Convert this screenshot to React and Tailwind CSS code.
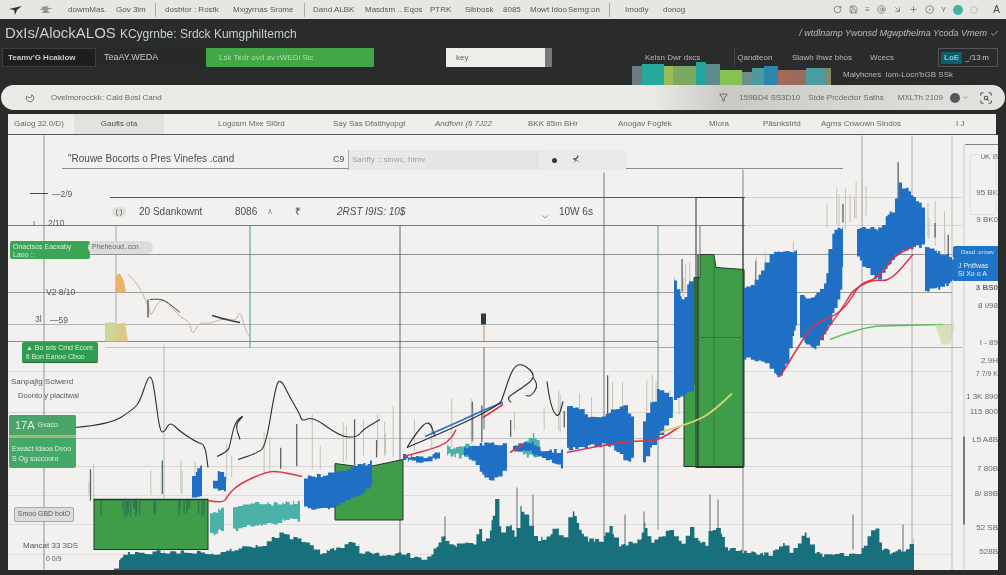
import { Circle, CircleDot, Save, AtSign, Plus, ChevronDown, Filter, ScanSearch, Check, RotateCw, ArrowDownRight, Moon } from 'lucide-react';

// small seeded random so the chart comes out the same on each load
function rng(seed) {
    let a = seed;
    return () => {
        a = (a + 0x6d2b79f5) | 0;
        let t = Math.imul(a ^ (a >>> 15), 1 | a);
        t = (t + Math.imul(t ^ (t >>> 7), 61 | t)) ^ t;
        return ((t ^ (t >>> 14)) >>> 0) / 4294967296;
    };
}

function lerp(pts, x) {
    for (let i = 0; i < pts.length - 1; i++) {
        const [x0, y0] = pts[i];
        const [x1, y1] = pts[i + 1];
        if (x >= x0 && x <= x1) return y0 + ((y1 - y0) * (x - x0)) / (x1 - x0 || 1);
    }
    return pts[pts.length - 1][1];
}

// blocky band between a top and a bottom profile, jitter is held for a few px
function band(top, bottom, seed, amp = 5) {
    const r = rng(seed);
    const x0 = top[0][0];
    const x1 = top[top.length - 1][0];
    const up = [];
    const down = [];
    let x = x0;
    while (x < x1) {
        const w = 1 + r() * 4;
        const nx = Math.min(x + w, x1);
        const ya = (lerp(top, x) + (r() - 0.5) * amp).toFixed(1);
        const yb = (lerp(bottom, x) + (r() - 0.5) * amp).toFixed(1);
        up.push(`${x.toFixed(1)},${ya}`, `${nx.toFixed(1)},${ya}`);
        down.unshift(`${nx.toFixed(1)},${yb}`, `${x.toFixed(1)},${yb}`);
        x = nx;
    }
    return [...up, ...down].join(' ');
}

function wicks(x0, x1, count, top, len, seed) {
    const r = rng(seed);
    const out = [];
    for (let i = 0; i < count; i++) {
        const x = x0 + r() * (x1 - x0);
        const y = lerp(top, x);
        out.push([x, y - 4 - r() * len, y + 4 + r() * 10]);
    }
    return out;
}

// rounded line through the points
function smooth(pts) {
    let d = `M${pts[0][0]} ${pts[0][1]}`;
    for (let i = 1; i < pts.length - 1; i++) {
        const mx = (pts[i][0] + pts[i + 1][0]) / 2;
        const my = (pts[i][1] + pts[i + 1][1]) / 2;
        d += ` Q${pts[i][0]} ${pts[i][1]} ${mx} ${my}`;
    }
    const last = pts[pts.length - 1];
    return `${d} L${last[0]} ${last[1]}`;
}

const hLines = [
    [62, 348, 169, '#6f7270', 0.8],
    [625, 843, 169, '#6f7270', 0.8],
    [110, 745, 198, '#55585a', 1.2],
    [745, 962, 198, '#c8c8c6', 0.8],
    [8, 745, 226, '#777a78', 1],
    [745, 962, 226, '#d0d0ce', 0.8],
    [44, 962, 255, '#77797a', 0.8],
    [8, 952, 293, '#83857f', 0.8],
    [8, 952, 325, '#a2a4a0', 0.8],
    [8, 658, 342, '#7f8a84', 1],
    [106, 700, 348, '#b5b5b0', 0.8],
    [658, 962, 348, '#9a9a96', 0.8],
    [8, 952, 372, '#d8d8d5', 0.8],
    [8, 952, 413, '#d0d0cd', 0.8],
    [8, 952, 439, '#b5b5b2', 0.8],
    [8, 952, 467, '#d2d2cf', 0.8],
    [8, 952, 496, '#d8d8d5', 0.8],
    [8, 952, 525, '#d8d8d5', 0.8],
    [8, 952, 555, '#dcdcd9', 0.8],
];

const vLines = [
    [44, 136, 570, '#85888a', 0.9],
    [116, 226, 342, '#8fb5ac', 1],
    [164, 345, 570, '#8fc4b4', 0.9],
    [250, 226, 348, '#3f9d92', 1],
    [400, 226, 570, '#55585a', 0.9],
    [484, 348, 430, '#5c5f5f', 0.9],
    [604, 173, 540, '#66696a', 0.9],
    [658, 226, 530, '#5f8f8c', 0.9],
    [743, 170, 555, '#777a78', 0.9],
    [862, 136, 560, '#9a9c9a', 0.9],
    [912, 136, 560, '#a7a9a7', 0.9],
    [952, 136, 570, '#b4b6b4', 0.9],
    [964, 145, 570, '#c4c6c4', 0.9],
];

const volTop = [
    [114, 570], [122, 558], [128, 553], [200, 552], [215, 555], [240, 548], [262, 545], [280, 533], [290, 538], [300, 541], [320, 553], [340, 548],
    [350, 541], [360, 553], [380, 555], [400, 553], [420, 560], [430, 555], [437, 546], [443, 532], [447, 547], [475, 543], [478, 524], [483, 545], [490, 532],
    [495, 500], [500, 532], [510, 526], [515, 540], [520, 507], [530, 528], [535, 540], [550, 538], [555, 520], [560, 540], [566, 535], [570, 503], [575, 520],
    [585, 540], [600, 542], [610, 525], [618, 548], [640, 540], [644, 522], [650, 545], [662, 535], [670, 530], [680, 545], [690, 528], [695, 538], [705, 546], [710, 528],
    [720, 530], [724, 548], [744, 553], [770, 555], [783, 545], [790, 552], [800, 540], [805, 532], [812, 553], [830, 557], [838, 555], [860, 553], [868, 535], [875, 525], [880, 548], [890, 553], [905, 550], [914, 540],
];

const blueBands = [
    [[[192, 478], [197, 470], [202, 465]], [[192, 498], [202, 498]], 3, 3],
    [[[213, 482], [219, 470], [226, 478]], [[213, 490], [226, 492]], 4, 4],
    [[[304, 478], [320, 476], [340, 472], [372, 462]], [[304, 508], [330, 510], [345, 500], [372, 488]], 5, 4],
    [[[403, 456], [420, 458], [440, 452]], [[403, 460], [420, 462], [440, 458]], 6, 3],
    [[[464, 449], [477, 446], [480, 444], [507, 446]], [[464, 455], [477, 468], [486, 482], [507, 470]], 7, 4],
    [[[513, 446], [530, 442], [540, 450], [563, 452]], [[513, 452], [530, 453], [550, 462], [563, 470]], 8, 4],
    [[[567, 405], [580, 408], [590, 418], [600, 420], [610, 412], [624, 405], [634, 425]], [[567, 450], [590, 447], [610, 445], [625, 462], [634, 455]], 9, 5],
    [[[643, 420], [657, 390], [673, 400]], [[643, 462], [655, 442], [673, 412]], 10, 4],
    [[[674, 281], [683, 303], [688, 283], [694, 280]], [[674, 400], [683, 395], [694, 390]], 11, 4],
    [[[744, 290], [755, 282], [770, 254], [797, 252]], [[744, 360], [760, 360], [778, 378], [785, 368], [797, 320]], 12, 4],
    [[[800, 296], [810, 300], [825, 285], [830, 235], [843, 226]], [[800, 340], [815, 350], [825, 335], [840, 295], [843, 262]], 13, 4],
    [[[857, 230], [877, 230], [893, 210], [898, 185], [910, 193], [925, 212]], [[857, 257], [870, 277], [880, 278], [893, 257], [913, 247], [925, 247]], 14, 5],
    [[[925, 248], [935, 252], [952, 258]], [[925, 292], [940, 288], [952, 283]], 15, 4],
];

const tealBands = [
    [[[233, 508], [260, 504], [300, 503]], [[233, 530], [260, 525], [300, 520]], 21],
    [[[210, 515], [224, 508]], [[210, 535], [224, 530]], 22],
    [[[447, 448], [470, 444]], [[447, 455], [470, 458]], 23],
    [[[523, 448], [532, 432], [540, 448]], [[523, 456], [540, 456]], 24],
];

const blackPaths = [
    [[75, 428], [110, 425], [133, 410], [140, 402], [148, 377], [152, 378], [155, 395], [160, 433], [165, 432], [170, 422], [180, 432], [197, 443], [205, 445], [208, 468]],
    [[217, 457], [228, 452], [230, 445], [235, 422], [245, 415], [235, 425], [240, 440]],
    [[238, 460], [258, 454], [266, 445], [275, 390], [280, 378], [290, 398], [300, 415], [302, 422], [313, 417], [340, 437], [357, 438], [363, 430], [380, 420]],
    [[407, 448], [417, 432], [429, 420], [435, 437]],
    [[407, 448], [457, 427], [500, 405], [503, 397], [513, 367], [523, 364], [537, 377], [520, 390], [507, 398], [511, 403]],
    [[533, 378], [539, 385], [531, 397], [526, 396]],
    [[547, 382], [550, 405], [558, 420], [563, 402]],
];

const redPaths = [
    [[208, 501], [224, 504], [228, 495], [240, 484], [267, 472], [280, 472], [302, 477]],
    [[403, 457], [440, 448], [452, 438], [456, 430]],
    [[483, 418], [503, 405]],
    [[510, 453], [523, 445]],
    [[567, 453], [607, 445], [635, 441], [657, 442], [680, 427]],
    [[780, 377], [803, 340], [812, 325], [843, 313], [860, 283], [877, 280], [893, 257], [913, 247]],
    [[820, 340], [845, 305], [853, 290], [873, 280], [890, 282], [913, 255]],
];

function ChartDrawing() {
    const allWicks = [
        ...wicks(85, 200, 10, [[85, 490], [200, 480]], 22, 31),
        ...wicks(225, 410, 18, [[225, 470], [410, 445]], 40, 32),
        ...wicks(410, 680, 24, [[410, 440], [680, 405]], 35, 33),
        ...wicks(674, 700, 5, [[674, 285], [700, 285]], 22, 34),
        ...wicks(744, 800, 6, [[744, 285], [800, 250]], 20, 35),
        ...wicks(825, 950, 18, [[825, 225], [900, 195], [950, 250]], 30, 36),
    ];
    const smudges = wicks(100, 205, 22, [[100, 505], [205, 505]], 2, 44);
    return (
        <svg viewBox="8 136 990 434" className="w-full h-full block">
            {hLines.map(([x1, x2, y, c, w], i) => (
                <line key={i} x1={x1} x2={x2} y1={y} y2={y} stroke={c} strokeWidth={w} />
            ))}
            {vLines.map(([x, y1, y2, c, w], i) => (
                <line key={i} x1={x} x2={x} y1={y1} y2={y2} stroke={c} strokeWidth={w} />
            ))}
            <line x1="964" x2="964" y1="437" y2="525" stroke="#5f6262" strokeWidth="1.6" />

            {/* little candles at the top left */}
            <polygon points="115,293 116,276 120,274 124,282 126,293" fill="#eab36a" />
            <polygon points="105,342 105,323 116,323 116,342" fill="#c9d79b" />
            <polygon points="116,342 116,325 125,323 128,342" fill="#dccb85" />
            <path d={smooth([[128, 275], [135, 281], [142, 293], [150, 310], [150, 318], [160, 299], [168, 303], [180, 318], [190, 322], [192, 337], [200, 322], [208, 325], [225, 318], [236, 322], [240, 310], [245, 330], [250, 338]])} fill="none" stroke="#c4b3a6" strokeWidth="1" />
            <path d={smooth([[150, 300], [160, 299], [168, 303], [180, 313]])} fill="none" stroke="#3d4044" strokeWidth="1" />
            <path d={smooth([[212, 316], [225, 320], [240, 323]])} fill="none" stroke="#3d4044" strokeWidth="1.4" />
            <line x1="148" x2="148" y1="300" y2="318" stroke="#55585a" strokeWidth="1.4" />
            <rect x="481" y="314" width="5" height="11" fill="#2c3a42" />
            <line x1="484" x2="484" y1="325" y2="342" stroke="#b49a56" strokeWidth="1" />
            <line x1="30" x2="48" y1="194" y2="194" stroke="#3d3d9a" strokeWidth="1" />
            <line x1="660" x2="700" y1="226" y2="226" stroke="#888b88" strokeWidth="1.2" />
            <line x1="700" x2="700" y1="226" y2="255" stroke="#888b88" strokeWidth="1.2" />

            {allWicks.map(([x, y1, y2], i) => (
                <line key={i} x1={x} x2={x} y1={y1} y2={y2} stroke={i % 5 === 0 ? '#5c6064' : '#c4c2ba'} strokeWidth={i % 5 === 0 ? 1.3 : 1} />
            ))}

            {/* green boxes */}
            <rect x="94" y="500" width="114" height="50" fill="#3f9c48" stroke="#1f3a28" strokeWidth="1" />
            <polygon points="335,464 365,468 403,460 403,520.5 335,520.5" fill="#3f9c48" stroke="#1f3a28" strokeWidth="1" />
            <polygon points="684,467 684,390 694,385 694,278 700,278 700,255 714,255 716,268 744,270 744,467" fill="#3f9c48" stroke="#1f3a28" strokeWidth="1" />
            <rect x="696" y="198" width="47" height="270" fill="none" stroke="#2c3331" strokeWidth="1" />
            <line x1="698" x2="698" y1="255" y2="467" stroke="#23402c" strokeWidth="1.4" />
            <line x1="714" x2="714" y1="255" y2="467" stroke="#2f7a3c" strokeWidth="1" />
            <line x1="684" x2="744" y1="338" y2="338" stroke="#2f7a3c" strokeWidth="1" />
            <line x1="94" x2="208" y1="500" y2="500" stroke="#1f3a28" strokeWidth="1.6" />
            {smudges.map(([x, y1, y2], i) => (
                <line key={i} x1={x} x2={x} y1={y1} y2={y2} stroke="#2a6a50" strokeWidth="1.4" opacity="0.7" />
            ))}

            {tealBands.map(([t, b, s], i) => (
                <polygon key={i} points={band(t, b, s, 5)} fill="#2fa79c" opacity="0.85" />
            ))}
            {blueBands.map(([t, b, s, a], i) => (
                <polygon key={i} points={band(t, b, s, a)} fill="#1f70c4" />
            ))}

            {/* volume */}
            <g stroke="#5f6a6a" strokeWidth="1">
                <line x1="710" x2="710" y1="495" y2="540" />
                <line x1="718" x2="718" y1="500" y2="540" />
                <line x1="853" x2="853" y1="515" y2="550" />
                <line x1="903" x2="903" y1="525" y2="552" />
                <line x1="445" x2="445" y1="517" y2="540" />
                <line x1="517" x2="517" y1="488" y2="530" />
                <line x1="533" x2="533" y1="495" y2="530" />
                <line x1="625" x2="625" y1="515" y2="550" />
                <line x1="644" x2="644" y1="512" y2="540" />
            </g>
            <polygon points={band(volTop, [[114, 590], [914, 590]], 43, 4)} fill="#17707c" />

            {redPaths.map((p, i) => (
                <path key={i} d={smooth(p)} fill="none" stroke="#d9344a" strokeWidth="1.5" />
            ))}
            <path d={smooth([[660, 433], [697, 422], [715, 410], [732, 394]])} fill="none" stroke="#d8cf74" strokeWidth="2" />
            <path d={smooth([[425, 437], [457, 423], [485, 410], [503, 403]])} fill="none" stroke="#2c6ccc" strokeWidth="1.5" />
            <path d={smooth([[830, 340], [863, 327], [900, 326], [943, 325]])} fill="none" stroke="#58c05e" strokeWidth="1.4" />
            <polygon points="935,325 955,325 950,345 942,345" fill="#c9d8a8" opacity="0.7" />
            {blackPaths.map((p, i) => (
                <path key={i} d={smooth(p)} fill="none" stroke="#2b2e30" strokeWidth="1.1" />
            ))}

            <g fill="#55585a" fontSize="8.5">
                <text x="52" y="197">—2/9</text>
                <text x="33" y="226" fontSize="8">I</text>
                <text x="48" y="226">2/10</text>
                <text x="46" y="295">V2 8/10</text>
                <text x="35" y="322">3l</text>
                <text x="50" y="323">—59</text>
                <text x="11" y="384" fontSize="8">Sanpajtg Sclwerd</text>
                <text x="18" y="398" fontSize="7.5">Doonto y placitwal</text>
                <text x="23" y="548" fontSize="8">Mancat 33 3DS</text>
                <text x="46" y="561" fontSize="7">0 0/9</text>
            </g>
            <g fill="#66696a" fontSize="8" textAnchor="end">
                <text x="998" y="159">0K B</text>
                <text x="998" y="195">95 BK</text>
                <text x="998" y="222">9 BK0</text>
                <text x="998" y="290" fontWeight="700">3 BS0</text>
                <text x="998" y="308">8 I/98</text>
                <text x="998" y="345">I - 89</text>
                <text x="998" y="363">2.9H</text>
                <text x="998" y="376" fontSize="7">7 7/9 K</text>
                <text x="998" y="399">1 3K 890</text>
                <text x="998" y="414">115 800</text>
                <text x="998" y="442">L5 A8B</text>
                <text x="998" y="471">7 80B</text>
                <text x="998" y="496">8/ 89B</text>
                <text x="998" y="530">52 SB</text>
                <text x="998" y="554">528B</text>
            </g>
            <rect x="970" y="155" width="26" height="60" rx="3" fill="none" stroke="#dcdcda" strokeWidth="1" />
            <line x1="965" x2="998" y1="145" y2="145" stroke="#7d807e" strokeWidth="1" />
        </svg>
    );
}

function MarketBars() {
    const bars = [
        ['#6d7b80', 632, 66, 8],
        ['#27a89c', 642, 64, 13],
        ['#9cbb52', 664, 66, 9],
        ['#7da861', 673, 66, 10],
        ['#20a69c', 696, 62, 10],
        ['#5f8a8c', 706, 64, 12],
        ['#86c354', 720, 70, 12],
        ['#6e8f88', 742, 72, 6],
        ['#4d9a9c', 752, 68, 10],
        ['#2b86b0', 764, 66, 10],
        ['#a46a58', 778, 70, 9],
        ['#9a6c60', 792, 70, 12],
        ['#4c9ba0', 806, 68, 13],
        ['#7f8c6a', 826, 68, 5],
    ];
    return (
        <svg viewBox="632 62 202 24" className="absolute left-[632px] top-[43px] w-[202px] h-[24px]">
            {bars.map(([c, x, y, w], i) => {
                const next = bars[i + 1];
                return <rect key={x} x={x} y={y} width={next ? next[1] - x : w} height={86 - y} fill={c} />;
            })}
        </svg>
    );
}

function TopLogo() {
    return (
        <svg viewBox="0 0 44 12" className="ml-[9px] w-[44px] h-[12px]">
            <path d="M0 5 L13 2 L8 6 L6 11 L5 6 Z" fill="#33373a" />
            <path d="M32 3 L40 2 L38 4 L44 4 L38 6 L41 9 L33 9 L35 6 L30 6 L34 4 Z" fill="#8a9490" />
        </svg>
    );
}

export default function App() {
    return (
        <div className="relative w-[1006px] h-[575px] overflow-hidden bg-[#2a2c2c] font-['Liberation_Sans',sans-serif] flex flex-col blur-[0.4px]">
            {/* top menu */}
            <div className="h-[19px] shrink-0 bg-[#e6e6e3] flex items-center text-[8px] text-[#54585a] whitespace-nowrap">
                <TopLogo />
                <span className="ml-[15px] w-[48px]">dowmMas.</span>
                <span className="w-[39px]">Gov 3im</span>
                <span className="h-[14px] w-px bg-[#aaa]"></span>
                <span className="ml-[9px] w-[68px]">dosbtor : Rostk</span>
                <span className="w-[71px]">Mxgyrnas Srome</span>
                <span className="h-[14px] w-px bg-[#aaa]"></span>
                <span className="ml-[8px] w-[52px]">Dand ALBK</span>
                <span className="w-[65px]">Masdsm .. Eqos</span>
                <span className="w-[35px]">PTRK</span>
                <span className="w-[38px]">Sibbosk</span>
                <span className="w-[27px]">8085</span>
                <span className="w-[38px]">Mowt Idoo</span>
                <span className="w-[41px]">Semg:on</span>
                <span className="h-[14px] w-px bg-[#aaa]"></span>
                <span className="ml-[15px] w-[38px]">Imodiy</span>
                <span className="w-[36px]">donog</span>
                <div className="ml-auto mr-[6px] flex items-center gap-[7px] text-[#6e7274]">
                    <RotateCw size={9} />
                    <Save size={9} />
                    <span>≡</span>
                    <AtSign size={9} />
                    <ArrowDownRight size={9} />
                    <Plus size={9} />
                    <CircleDot size={9} />
                    <span>Y</span>
                    <span className="w-[10px] h-[10px] rounded-full bg-[#3fb5a0]"></span>
                    <Circle size={8} className="text-[#a8aaa8]" />
                    <span className="ml-[8px] text-[10px] text-[#44484a]">A</span>
                </div>
            </div>

            {/* dark header */}
            <div className="h-[66px] shrink-0 relative">
                <div className="h-[29px] flex items-center px-[5px] text-[#c9cdcc] whitespace-nowrap">
                    <span className="text-[15px]">DxIs/AlockALOS</span>
                    <span className="ml-[4px] text-[12px]">KCygrnbe: Srdck Kumgphiltemch</span>
                    <span className="ml-auto mr-[2px] text-[9px] text-[#b9bdbc] flex items-center gap-[3px]">
                        <span className="italic">/ wtdlnamp Ywonsd Mgwpthelma Ycoda Vmem</span>
                        <Check size={9} />
                    </span>
                </div>
                <div className="h-[19px] flex items-stretch text-[8px] whitespace-nowrap">
                    <div className="ml-[2px] w-[94px] bg-[#1d1f1f] border border-[#3c3e3e] text-[#c7cac9] flex items-center pl-[5px] font-bold">
                        Teamv'G Hcaklow
                    </div>
                    <div className="w-[110px] bg-[#272a29] text-[#c7cac9] flex items-center pl-[8px] text-[9px]">TeaAY.WEDA</div>
                    <div className="w-[168px] bg-[#43a647] text-[#b9dcb7] flex items-center pl-[13px] rounded-[1px]">Lsk Tedr ovd av rWEDi Sic</div>
                    <div className="ml-[72px] w-[99px] bg-[#ededea] text-[#666] flex items-center pl-[10px]">key</div>
                    <div className="w-[7px] bg-[#77797a]"></div>
                    <div className="ml-[93px] w-[70px] flex items-center text-[#b5b9b8]">Kelsn Dwr dxcs</div>
                    <div className="ml-[19px] w-[58px] flex items-center text-[#b5b9b8] border-l border-[#444]">&nbsp;Qandteon</div>
                    <div className="w-[78px] flex items-center text-[#b5b9b8]">Slawh Ihwz bhos</div>
                    <div className="w-[68px] flex items-center text-[#b5b9b8]">Wcecs</div>
                    <div className="w-[60px] border border-[#555] flex items-center text-[#c4cac9] gap-[3px] pl-[2px]">
                        <span className="bg-[#0d5d6e] text-[#6fd0d8] px-[3px] font-bold">LoE</span>
                        <span>_/13&#8201;m</span>
                    </div>
                </div>
                <MarketBars />
                <span className="absolute left-[843px] top-[50px] text-[8px] text-[#b5b9b8] whitespace-nowrap">
                    Malyhcnes &nbsp;lom-Locn'bGB SSk
                </span>
            </div>

            {/* search pill */}
            <div className="h-[25px] shrink-0 mx-[1px] relative rounded-full bg-gradient-to-r from-[#e9e9e6] from-65% via-[#c9c9c5] via-72% to-[#e4e4e1] flex items-center text-[8px] text-[#66696a] whitespace-nowrap">
                <Moon size={10} className="ml-[24px] rotate-[-60deg]" />
                <span className="ml-[16px]">Ovelmorocckk: Cald Bosl Cand</span>
                <Filter size={9} className="ml-auto text-[#4a4c4e]" />
                <span className="ml-[11px]">159BD4 SS3D10</span>
                <span className="ml-[8px]">Stde Prcdector Saths</span>
                <span className="ml-[14px]">MXLTh 2109</span>
                <span className="ml-[7px] w-[10px] h-[10px] rounded-full bg-[#55585a]"></span>
                <ChevronDown size={7} className="ml-[2px]" />
                <ScanSearch size={14} className="ml-[10px] mr-[12px] text-[#55585a]" />
            </div>

            {/* tab row */}
            <div className="mt-[4px] h-[21px] shrink-0 ml-[8px] mr-[10px] bg-[#eeeeeb] border-b border-[#55585a] flex items-center text-[8px] text-[#66696a] whitespace-nowrap">
                <span className="ml-[6px] w-[60px]">Gaiog 32.0/D)</span>
                <span className="w-[90px] self-stretch flex items-center justify-center bg-[#e2e2df] text-[#4a4d4e]">Gaufis ota</span>
                <span className="w-[54px]"></span>
                <span className="w-[115px]">Logosm Mxe Sl0rd</span>
                <span className="w-[102px]">Say Sas Dfaithyopgt</span>
                <span className="w-[93px] italic">Andforn (6 7J22</span>
                <span className="w-[90px]">BKK 85m BHr</span>
                <span className="w-[91px]">Anogav Fogfek</span>
                <span className="w-[54px]">Mlora</span>
                <span className="w-[58px]">Päsnkstrtd</span>
                <span className="w-[135px]">Agms Cnwown Slndos</span>
                <span>I J</span>
            </div>

            {/* chart */}
            <div className="flex-1 min-h-0 ml-[8px] mr-[8px] mb-[5px] relative bg-[#f2f1ef]">
                <ChartDrawing />

                <span className="absolute left-[60px] top-[16px] text-[10px] text-[#4a4d50] whitespace-nowrap">"Rouwe Bocorts o Pres Vinefes .cand</span>
                <div className="absolute left-[325px] top-[15px] h-[20px] flex items-center text-[8px] text-[#77797a] whitespace-nowrap">
                    <span className="w-[15px] text-[9px] text-[#55585a]">C9</span>
                    <span className="w-[77px] h-full bg-[#e8e8e6] border-l border-[#aaa] flex items-center pl-[3px] text-[#9ea2a4]">Sanfty :: sinwc, htmw</span>
                    <span className="w-[112px] h-full bg-[#e6e6e4]"></span>
                    <span className="w-[89px] h-full bg-[#e9e9e7] flex items-center pl-[14px] gap-[15px] text-[#3a3c3e] border-l border-[#ddd]">
                        <span className="w-[5px] h-[5px] rounded-full bg-[#33363a]"></span>
                        <span className="text-[9px]">⊀</span>
                    </span>
                </div>

                <div className="absolute left-[104px] top-[69px] flex items-center text-[10px] text-[#4a4d50] whitespace-nowrap">
                    <span className="w-[14px] h-[10px] rounded-full bg-[#dededb] text-[7px] text-center leading-[10px]">( )</span>
                    <span className="ml-[13px] w-[96px]">20 Sdankownt</span>
                    <span className="w-[30px]">8086</span>
                    <span className="w-[30px] text-[8px] text-[#888]">&nbsp;∧</span>
                    <span className="w-[30px]">₹</span>
                    <span className="w-[205px] ml-[12px] italic">2RST I9IS: 10$</span>
                    <span className="w-[17px]">‿</span>
                    <span>10W 6s</span>
                </div>

                <div className="absolute left-[2px] top-[106px] w-[80px] h-[18px] bg-[#3aa655] rounded-[2px] text-[7px] text-[#d9efe0] leading-[8px] pl-[3px] pt-[2px] whitespace-nowrap">
                    Onactsos Eacxaby
                    <br />
                    Laoo ::
                </div>
                <div className="absolute left-[80px] top-[106px] w-[65px] h-[13px] bg-[#dcdcda] rounded-full text-[7px] text-[#66696a] flex items-center pl-[4px] whitespace-nowrap">Pheheoud..ccn</div>
                <div className="absolute left-[14px] top-[207px] w-[76px] h-[21px] bg-[#2f9c52] rounded-[2px] border-b border-[#2c6a3c] text-[7px] text-[#d9efe0] leading-[9px] pl-[4px] pt-[1px] whitespace-nowrap overflow-hidden">
                    ▲ Bo sris Cmd Ecore
                    <br />
                    fi Bon Eanoo Cboo
                </div>
                <div className="absolute left-[1px] top-[280px] w-[67px] h-[53px] bg-[#44a868] rounded-[2px] text-[#dff0e2] text-[7px] overflow-hidden whitespace-nowrap">
                    <div className="h-[20px] bg-[#4aa368] pl-[6px] flex items-center gap-[3px]">
                        <span className="text-[11px]">17A</span>
                        <span>Gvaco</span>
                    </div>
                    <div className="h-[3px] bg-[#a8b673]"></div>
                    <div className="pl-[3px] pt-[6px] leading-[10px]">
                        Exeact Idaoa Dvoo
                        <br />
                        S Og soccooro
                    </div>
                </div>
                <div className="absolute left-[6px] top-[372px] w-[60px] h-[15px] bg-[#dcdcda] border border-[#aaa] rounded-[2px] text-[7px] text-[#55585a] flex items-center justify-center whitespace-nowrap">Smoo GBD botO</div>

                <div className="absolute right-[0px] top-[111px] w-[45px] h-[13px] bg-[#1f74c8] rounded-l-[2px] text-[6px] text-[#d5e5f5] flex items-center pl-[8px] whitespace-nowrap overflow-hidden">Dasd .omwv</div>
                <div className="absolute right-[0px] top-[124px] w-[46px] h-[22px] bg-[#1f74c8] rounded-l-[2px] text-[7px] text-[#e5eef8] leading-[8px] pl-[6px] pt-[3px] whitespace-nowrap overflow-hidden">
                    J Pntfwas
                    <br />
                    Si Xo o A
                </div>
            </div>
        </div>
    );
}
